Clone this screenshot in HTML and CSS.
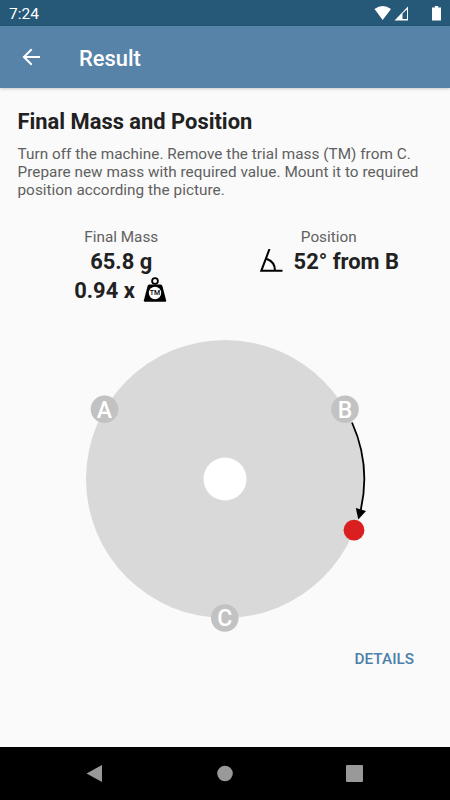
FILE: index.html
```html
<!DOCTYPE html>
<html lang="en">
<head>
<meta charset="utf-8">
<title>Result</title>
<link rel="stylesheet" href="styles.css">
</head>
<body>
<div class="status">
  <span class="clock">7:24</span>
  <svg class="status-icons" width="80" height="26" viewBox="370 0 80 26">
    <path d="M374.500 9Q382.700 3 391 9L382.700 20Z" fill="#fff"/>
    <path d="M408 6.500V20.500H394.500Z" fill="#fff"/>
    <path d="M402.500 13.500L407 9.500V19H402.500Z" fill="#265878"/>
    <path d="M434.800 6H438.200V7.500H441V20.500H432V7.500H434.800Z" fill="#fff"/>
  </svg>
</div>
<header class="appbar">
  <svg class="back" width="20" height="20" viewBox="0 0 20 20" fill="none" stroke="#fff" stroke-width="2"><path d="M19 10H2.800M10.700 2.200L2.900 10L10.700 17.800"/></svg>
  <h1 class="title">Result</h1>
</header>
<main class="content">
  <h2 class="heading">Final Mass and Position</h2>
  <p class="intro">Turn off the machine. Remove the trial mass (TM) from C.<br>Prepare new mass with required value. Mount it to required<br>position according the picture.</p>
  <div class="results">
    <section class="result">
      <div class="label">Final Mass</div>
      <div class="value">65.8 g</div>
      <div class="value">0.94 x
        <svg class="weight" width="24" height="26" viewBox="143 277 24 26">
          <circle cx="155" cy="281" r="2.900" fill="none" stroke="#000" stroke-width="1.800"/>
          <path d="M150 284.500H160.500Q162 284.500 162.400 286L166.100 300.200Q166.500 301.800 165 301.800H145Q143.500 301.800 143.900 300.200L147.600 286Q148 284.500 149.500 284.500Z"/>
          <circle cx="155" cy="293" r="6.200" fill="#fff"/>
          <text class="tm" x="155" y="295.400" text-anchor="middle">TM</text>
        </svg>
      </div>
    </section>
    <section class="result">
      <div class="label">Position</div>
      <div class="value">
        <svg class="angle" width="26" height="26" viewBox="259 249.500 26 26" fill="none" stroke="#000" stroke-width="2"><path d="M269.500 249.500L261.300 271.300H282.500M266.300 259.200C271.500 261 275 265.500 275 271"/></svg>
        52° from B</div>
    </section>
  </div>
  <svg class="disc" width="300" height="310" viewBox="75 330 300 310">
    <circle cx="225" cy="479" r="139" fill="#d9d9d9"/>
    <circle cx="225" cy="479" r="21.500" fill="#fff"/>
    <g fill="#c2c2c2"><circle cx="104.500" cy="409.300" r="13.800"/><circle cx="345" cy="409.300" r="13.800"/><circle cx="224.800" cy="618" r="13.800"/></g>
    <g class="marks"><text x="104.500" y="417.500">A</text><text x="345" y="417.500">B</text><text x="224.800" y="626.200">C</text></g>
    <path d="M352 422.500A139.300 139.300 0 0 1 360.800 510" fill="none" stroke="#000" stroke-width="1.800"/>
    <path d="M355.800 508L366 511L358.300 519.500Z"/>
    <circle cx="354" cy="530.200" r="10.400" fill="#d91f1f"/>
  </svg>
  <a class="details">DETAILS</a>
</main>
<nav class="navbar">
  <svg width="18" height="18" viewBox="0 0 18 18"><path d="M.5 8.500L16 0V17Z"/></svg>
  <svg width="18" height="18" viewBox="0 0 18 18"><circle cx="9" cy="8.500" r="7.800"/></svg>
  <svg width="18" height="18" viewBox="0 0 18 18"><rect x="0" y="0" width="17" height="17" rx="1"/></svg>
</nav>
</body>
</html>
```
FILE: styles.css
```css
* { box-sizing: border-box; }
body {
  margin: 0;
  width: 450px;
  height: 800px;
  display: flex;
  flex-direction: column;
  overflow: hidden;
  background: #fafafa;
  font-family: Roboto, "Liberation Sans", sans-serif;
  color: #212121;
}
svg { display: block; flex: none; }
.status {
  height: 26px;
  flex: none;
  display: flex;
  justify-content: space-between;
  background: #265878;
  color: #fff;
}
.clock { padding-left: 9px; font-size: 15.5px; line-height: 28px; }
.appbar {
  height: 62px;
  flex: none;
  display: flex;
  align-items: center;
  padding-left: 21px;
  background: #5883a9;
  box-shadow: 0 1px 3px rgba(0, 0, 0, .2);
}
.title { margin: 3px 0 0 38px; color: #fff; font-size: 21.9px; font-weight: 500; line-height: 26px; }
.content {
  flex: 1;
  display: flex;
  flex-direction: column;
  padding: 21px 17.5px 0;
}
.heading { margin: 0; font-size: 21.9px; line-height: 26px; font-weight: 700; white-space: nowrap; }
.intro { margin: 10px 0 0; font-size: 15.3px; line-height: 18px; letter-spacing: .035px; color: #606060; white-space: nowrap; }
.results { display: flex; margin-top: 29px; height: 102px; }
.result { flex: 1; }
.label { margin-bottom: 1px; text-align: center; font-size: 15.3px; line-height: 18px; color: #606060; }
.value {
  display: flex;
  justify-content: center;
  align-items: center;
  height: 29px;
  font-size: 21.9px;
  font-weight: 700;
  white-space: nowrap;
}
.weight { margin: -2px 1px 0 8.500px; }
.angle { margin-right: 9px; }
.tm { font-size: 7px; font-weight: 500; }
.disc { align-self: center; }
.marks { fill: #fff; font-size: 23px; font-weight: 500; text-anchor: middle; }
.details {
  align-self: flex-end;
  margin: 10px 18.500px 0 0;
  font-size: 15.3px;
  font-weight: 500;
  line-height: 18px;
  color: #4b80aa;
}
.navbar {
  height: 53px;
  flex: none;
  display: flex;
  gap: 112px;
  justify-content: center;
  align-items: center;
  background: #000;
  fill: #999;
}
```
